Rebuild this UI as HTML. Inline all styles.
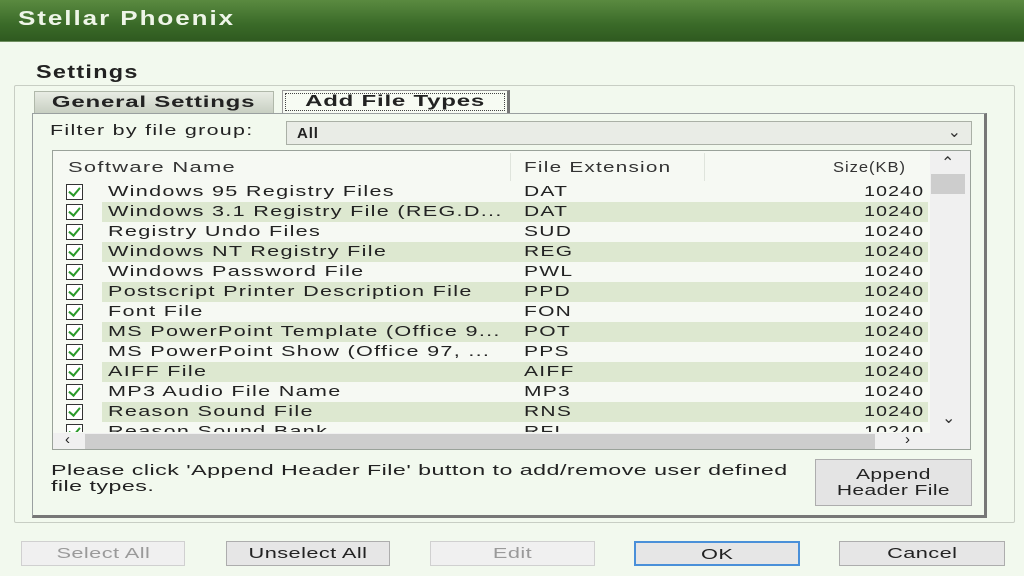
<!DOCTYPE html>
<html><head><style>
*{box-sizing:border-box;margin:0;padding:0}
body{width:1024px;height:576px;overflow:hidden;background:#f2f9ee;font-family:"Liberation Sans",sans-serif;position:relative;color:#222}
.a{position:absolute}
.s{display:inline-block;transform:scaleX(1.43);transform-origin:left center}
.c{display:inline-block;transform:scaleX(1.45);transform-origin:center}
.title{left:0;top:0;width:1024px;height:42px;background:linear-gradient(#5a8a40,#3a6a28 60%,#2f5a20);border-bottom:1px solid #6f8f60}
.title span{position:absolute;left:18px;top:8px;font:bold 20px "Liberation Sans",sans-serif;color:#eef5e8;letter-spacing:1.5px;transform:scaleX(1.3);transform-origin:left}
.grp{left:14px;top:85px;width:1001px;height:438px;border:1px solid #c8cec4;border-radius:2px}
.lbl{font-size:18px;font-weight:bold;letter-spacing:1px;background:#f2f9ee;padding:0 4px}
.tab{height:23px;font-weight:bold;font-size:15.5px;letter-spacing:.5px;text-align:center;line-height:22px}
.panel{left:32px;top:113px;width:955px;height:405px;border:1px solid #9aa0a0;border-right:3px solid #777;border-bottom:3px solid #777;background:#f2f9ee}
.t{font-size:15px;letter-spacing:.9px;white-space:nowrap}
.row{position:absolute;left:54px;width:874px;height:20px}
.row .cb{position:absolute;left:12px;top:2px;width:17px;height:16px;border:1.5px solid #333;background:#fff}
.row .cb:after{content:"";position:absolute;left:4px;top:0px;width:5px;height:9px;border:solid #2a9a2a;border-width:0 2.5px 2.5px 0;transform:rotate(40deg)}
.row .n{position:absolute;left:54px;top:1px;transform:scaleX(1.44);transform-origin:left}
.row .e{position:absolute;left:470px;top:1px;transform:scaleX(1.4);transform-origin:left}
.row .sz{position:absolute;right:4px;top:1px;transform:scaleX(1.3);transform-origin:right}
.g{background:linear-gradient(90deg,transparent 48px,#dde8d0 48px)}
.btn{position:absolute;top:541px;height:25px;border:1px solid #adadad;background:#e6e6e6;font-size:15px;text-align:center;line-height:23px;letter-spacing:.3px}
</style></head><body>
<div class="a title"><span>Stellar Phoenix</span></div>
<div class="a grp"></div>
<div class="a lbl" style="left:32px;top:62px"><span style="display:inline-block;transform:scaleX(1.3);transform-origin:left">Settings</span></div>
<div class="a tab" style="left:34px;top:91px;width:240px;background:linear-gradient(#e8ece4,#c8cfc2);border:1px solid #b0b8aa"><span class="c" style="transform:scaleX(1.55)">General Settings</span></div>
<div class="a tab" style="left:282px;top:90px;width:228px;height:24px;background:#f7fbf3;border:1px solid #999;border-right:3px solid #777"><div style="position:absolute;inset:2px;border:1px dotted #444"></div><span class="c" style="transform:scaleX(1.55)">Add File Types</span></div>
<div class="a panel"></div>
<div class="a t" style="left:50px;top:122px"><span class="s">Filter by file group:</span></div>
<div class="a" style="left:286px;top:121px;width:686px;height:24px;background:#e9ece6;border:1px solid #aab0a6"><span class="t" style="position:absolute;left:10px;top:3px;font-weight:bold">All</span><span style="position:absolute;right:10px;top:0px;font-size:16px;color:#333">&#x2304;</span></div>
<div class="a" style="left:52px;top:150px;width:919px;height:300px;background:#f6f9f3;border:1px solid #9aa29a;overflow:hidden">
<div class="a t" style="left:15px;top:8px;color:#333"><span class="s" style="transform:scaleX(1.46)">Software Name</span></div>
<div class="a" style="left:457px;top:2px;width:1px;height:28px;background:#dfe4dc"></div>
<div class="a t" style="left:471px;top:8px;color:#333"><span class="s" style="transform:scaleX(1.38)">File Extension</span></div>
<div class="a" style="left:651px;top:2px;width:1px;height:28px;background:#dfe4dc"></div>
<div class="a t" style="left:780px;top:8px;color:#333"><span class="s" style="transform:scaleX(1.1)">Size(KB)</span></div>
<div class="a" style="left:877px;top:0;width:40px;height:282px;background:#f0f0f0"></div>
<div class="a" style="left:888px;top:2px;font-size:16px;color:#333">&#x2303;</div>
<div class="a" style="left:878px;top:23px;width:34px;height:20px;background:#cdcdcd"></div>
<div class="a" style="left:889px;top:257px;font-size:16px;color:#333">&#x2304;</div>
<div class="a" style="left:0;top:282px;width:917px;height:17px;background:#f0f0f0"></div>
<div class="a" style="left:32px;top:283px;width:790px;height:15px;background:#cdcdcd"></div>
<div class="a" style="left:12px;top:280px;font-size:15px">&#x2039;</div>
<div class="a" style="left:852px;top:280px;font-size:15px">&#x203A;</div>
</div>
<div class="a" style="left:0;top:0">
<div class="row t" style="top:182px"><div class="cb"></div><span class="n">Windows 95 Registry Files</span><span class="e">DAT</span><span class="sz">10240</span></div>
<div class="row t g" style="top:202px"><div class="cb"></div><span class="n">Windows 3.1 Registry File (REG.D...</span><span class="e">DAT</span><span class="sz">10240</span></div>
<div class="row t" style="top:222px"><div class="cb"></div><span class="n">Registry Undo Files</span><span class="e">SUD</span><span class="sz">10240</span></div>
<div class="row t g" style="top:242px"><div class="cb"></div><span class="n">Windows NT Registry File</span><span class="e">REG</span><span class="sz">10240</span></div>
<div class="row t" style="top:262px"><div class="cb"></div><span class="n">Windows Password File</span><span class="e">PWL</span><span class="sz">10240</span></div>
<div class="row t g" style="top:282px"><div class="cb"></div><span class="n">Postscript Printer Description File</span><span class="e">PPD</span><span class="sz">10240</span></div>
<div class="row t" style="top:302px"><div class="cb"></div><span class="n">Font File</span><span class="e">FON</span><span class="sz">10240</span></div>
<div class="row t g" style="top:322px"><div class="cb"></div><span class="n">MS PowerPoint Template (Office 9...</span><span class="e">POT</span><span class="sz">10240</span></div>
<div class="row t" style="top:342px"><div class="cb"></div><span class="n">MS PowerPoint Show (Office 97, ...</span><span class="e">PPS</span><span class="sz">10240</span></div>
<div class="row t g" style="top:362px"><div class="cb"></div><span class="n">AIFF File</span><span class="e">AIFF</span><span class="sz">10240</span></div>
<div class="row t" style="top:382px"><div class="cb"></div><span class="n">MP3 Audio File Name</span><span class="e">MP3</span><span class="sz">10240</span></div>
<div class="row t g" style="top:402px"><div class="cb"></div><span class="n">Reason Sound File</span><span class="e">RNS</span><span class="sz">10240</span></div>
<div class="row t" style="top:422px;height:10px;overflow:hidden"><div class="cb"></div><span class="n">Reason Sound Bank</span><span class="e">RFL</span><span class="sz">10240</span></div>
</div>
<div class="a t" style="left:51px;top:463px;line-height:16px;letter-spacing:.3px;transform:scaleX(1.55);transform-origin:left">Please click 'Append Header File' button to add/remove user defined<br>file types.</div>
<div class="a t" style="left:815px;top:459px;width:157px;height:47px;background:#e4e4e4;border:1px solid #adadad;text-align:center;line-height:16px;padding-top:7px;letter-spacing:.3px"><span class="c" style="transform:scaleX(1.4)">Append<br>Header File</span></div>
<div class="btn" style="left:21px;width:164px;color:#9a9a9a;background:#f0f0f0;border-color:#d0d0d0"><span class="c">Select All</span></div>
<div class="btn" style="left:226px;width:164px"><span class="c">Unselect All</span></div>
<div class="btn" style="left:430px;width:165px;color:#9a9a9a;background:#f0f0f0;border-color:#d0d0d0"><span class="c">Edit</span></div>
<div class="btn" style="left:634px;width:166px;border:2px solid #4a90d9"><span class="c">OK</span></div>
<div class="btn" style="left:839px;width:166px"><span class="c">Cancel</span></div>
</body></html>
